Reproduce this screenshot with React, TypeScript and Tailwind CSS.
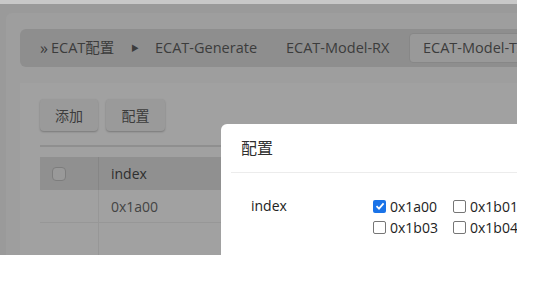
export default function App() {
  const opts = [
    { label: '0x1a00', checked: true },
    { label: '0x1b01', checked: false },
    { label: '0x1b03', checked: false },
    { label: '0x1b04', checked: false },
  ];

  return (
    <div className="w-[554px] h-[302px] bg-white overflow-hidden" style={{ fontFamily: '"Open Sans", "Noto Sans CJK SC", sans-serif' }}>
      <div className="relative w-[517px] h-[255px] overflow-hidden bg-[#9a9a9a]">
        <div className="h-[4px] bg-[#c8c8c8]" />
        <div className="pl-[6px] pt-[9px]">
          <div className="bg-[#9e9e9e] rounded-tl-md pl-[14px] pt-[16px] h-[260px]">
            {/* breadcrumb */}
            <div className="h-[38px] bg-[#8e8e8e] rounded-l-md flex items-center text-[14.5px] text-[#3c3c3c] whitespace-nowrap">
              <span className="ml-[20px] w-[91px] shrink-0 flex items-center">
                <span className="text-[16px] mr-[3px] leading-none">»</span>ECAT配置
              </span>
              <span className="w-[24px] shrink-0 text-[8px]">▶</span>
              <span className="w-[131px] shrink-0">ECAT-Generate</span>
              <span className="w-[123px] shrink-0">ECAT-Model-RX</span>
              <span className="shrink-0 h-[30px] px-[13px] flex items-center bg-[#999999] border border-[#878787] rounded-sm">ECAT-Model-TX</span>
            </div>
            {/* content */}
            <div className="mt-[16px] bg-[#a1a1a1] pl-[20px] pt-[16px] h-[200px]">
              <div className="flex gap-[8px]">
                <button className="w-[58px] h-[32px] bg-[#9a9a9a] rounded-sm shadow-[0_1px_2px_rgba(0,0,0,0.25)] text-[14px] text-[#3c3c3c]">添加</button>
                <button className="w-[59px] h-[32px] bg-[#9a9a9a] rounded-sm shadow-[0_1px_2px_rgba(0,0,0,0.25)] text-[14px] text-[#3c3c3c]">配置</button>
              </div>
              <div className="mt-[14px] border-t-2 border-[#8f8f8f] w-[300px]">
                <div className="h-[10px]" />
                <div className="flex h-[33px] bg-[#909090] text-[14px] text-[#2e2e2e]">
                  <div className="w-[59px] flex items-center pl-[12px] border-r border-[#868686]">
                    <span className="w-[14px] h-[14px] rounded-sm border border-[#7d7d7d] bg-[#999999]" />
                  </div>
                  <div className="flex items-center pl-[12px]">index</div>
                </div>
                <div className="flex h-[33px] border-b border-[#979797] text-[14px] text-[#444]">
                  <div className="w-[59px] border-r border-[#979797]" />
                  <div className="flex items-center pl-[12px]">0x1a00</div>
                </div>
                <div className="flex h-[33px]">
                  <div className="w-[59px] border-r border-[#979797]" />
                </div>
              </div>
            </div>
          </div>
        </div>

        {/* dialog */}
        <div className="absolute left-[221px] top-[124px] w-[320px] h-[160px] bg-white rounded-tl-md">
          <div className="h-[48px] pl-[20px] flex items-center text-[16px] text-[#303030]">配置</div>
          <div className="ml-[10px] h-px bg-[#ececec]" />
          <div className="flex pt-[24px] text-[14px] text-[#222]">
            <div className="w-[152px] pl-[30px] leading-[18px]">index</div>
            <div className="grid grid-cols-[80px_80px] gap-y-[3px]">
              {opts.map((o) => (
                <label key={o.label} className="flex items-center gap-[4px] h-[18px]">
                  {o.checked ? (
                    <span className="w-[13px] h-[13px] rounded-[2px] bg-[#1a73e8] flex items-center justify-center">
                      <svg width="10" height="10" viewBox="0 0 10 10">
                        <path d="M1.5 5.2 L4 7.6 L8.6 2.4" stroke="white" strokeWidth="1.8" fill="none" />
                      </svg>
                    </span>
                  ) : (
                    <span className="w-[13px] h-[13px] rounded-[2px] border border-[#767676] bg-white" />
                  )}
                  <span>{o.label}</span>
                </label>
              ))}
            </div>
          </div>
        </div>
      </div>
    </div>
  );
}
